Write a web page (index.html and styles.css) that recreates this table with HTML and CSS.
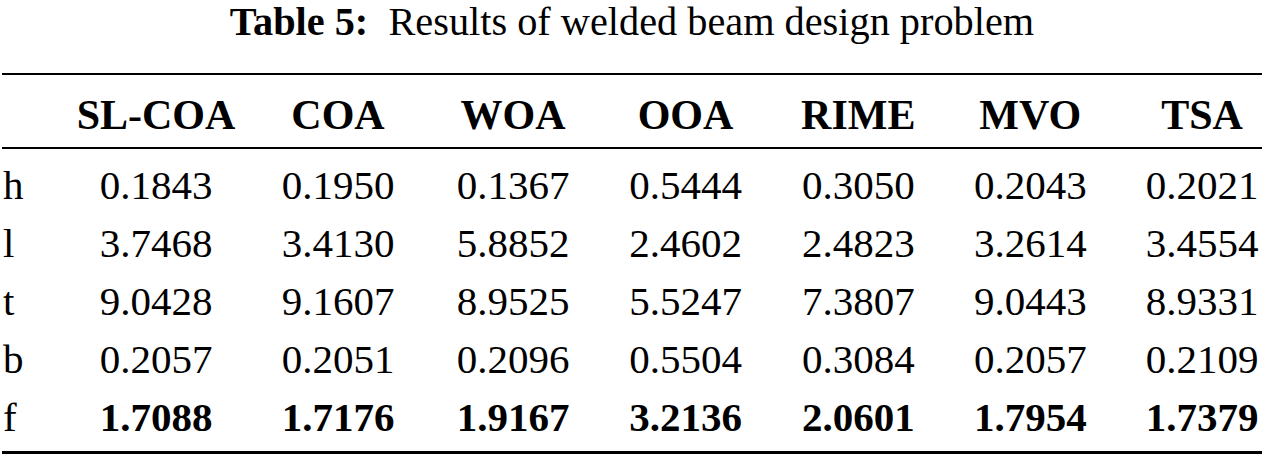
FILE: index.html
```html
<!DOCTYPE html>
<html>
<head>
<meta charset="utf-8">
<link rel="stylesheet" href="styles.css">
</head>
<body>
<div class="wrap">
  <div class="caption"><b>Table 5:</b>&nbsp; Results of welded beam design problem</div>
  <div class="table">
    <div class="row head">
      <span class="lab"></span><span>SL-COA</span><span>COA</span><span>WOA</span><span>OOA</span><span>RIME</span><span>MVO</span><span class="last">TSA</span>
    </div>
    <div class="row data first"><span class="lab">h</span><span>0.1843</span><span>0.1950</span><span>0.1367</span><span>0.5444</span><span>0.3050</span><span>0.2043</span><span class="last">0.2021</span></div>
    <div class="row data"><span class="lab">l</span><span>3.7468</span><span>3.4130</span><span>5.8852</span><span>2.4602</span><span>2.4823</span><span>3.2614</span><span class="last">3.4554</span></div>
    <div class="row data"><span class="lab">t</span><span>9.0428</span><span>9.1607</span><span>8.9525</span><span>5.5247</span><span>7.3807</span><span>9.0443</span><span class="last">8.9331</span></div>
    <div class="row data"><span class="lab">b</span><span>0.2057</span><span>0.2051</span><span>0.2096</span><span>0.5504</span><span>0.3084</span><span>0.2057</span><span class="last">0.2109</span></div>
    <div class="row data final bold"><span class="lab">f</span><span>1.7088</span><span>1.7176</span><span>1.9167</span><span>3.2136</span><span>2.0601</span><span>1.7954</span><span class="last">1.7379</span></div>
  </div>
</div>
</body>
</html>
```
FILE: styles.css
```css
html, body {
  margin: 0;
  padding: 0;
  background: #fff;
}
.wrap {
  padding: 0 2px;
  font-family: "Liberation Serif", "Times New Roman", serif;
  color: #000;
}
.caption {
  text-align: center;
  font-size: 40.3px;
  line-height: 44px;
  height: 73px;
  white-space: nowrap;
}
.caption b {
  font-weight: bold;
}
.table {
  width: 1260px;
}
.row {
  display: grid;
  grid-template-columns: 61px 186px 178px 172px 173px 172.5px 171.5px 146px;
  text-align: center;
  white-space: nowrap;
}
.row .lab {
  text-align: left;
  padding-left: 1px;
}
.row .last {
  padding-left: 26px;
}
.head {
  border-top: 2px solid #000;
  border-bottom: 2px solid #000;
  font-size: 42px;
  font-weight: bold;
  line-height: 46px;
  padding: 17px 0 9px;
}
.data {
  font-size: 41px;
  line-height: 58px;
}
.data.first {
  padding-top: 7px;
}
.data.final {
  padding-bottom: 5px;
  border-bottom: 3px solid #000;
}
.data.bold span {
  font-weight: bold;
}
.data.bold span.lab {
  font-weight: normal;
}
```
